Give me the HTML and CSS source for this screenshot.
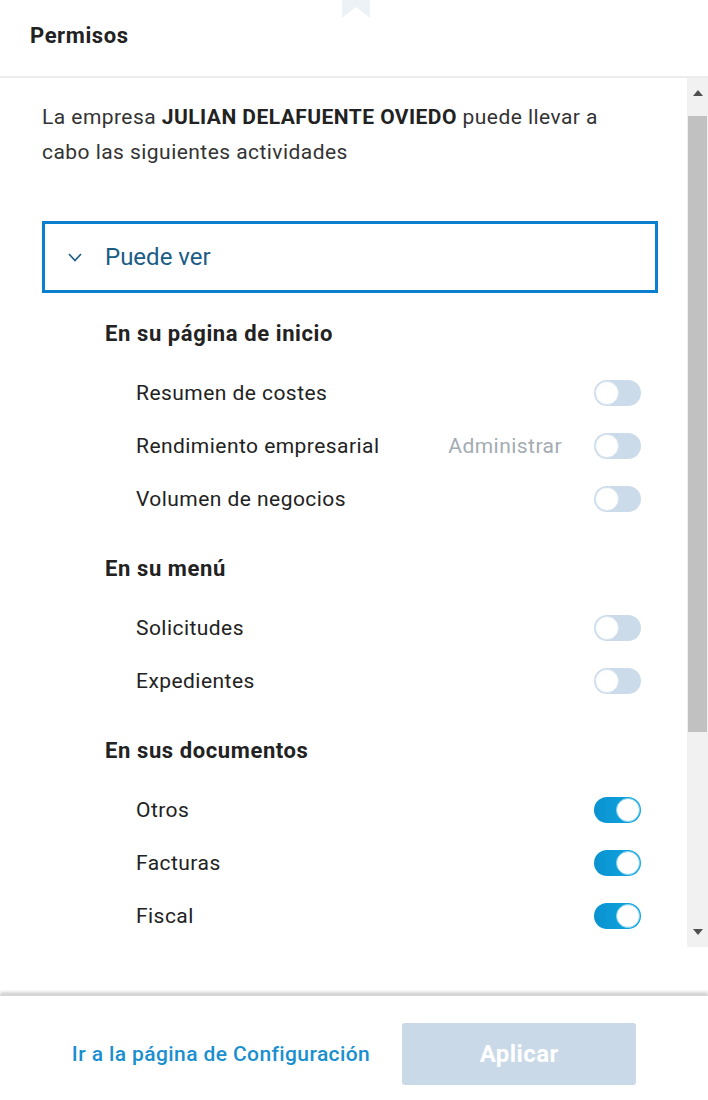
FILE: index.html
```html
<!DOCTYPE html>
<html>
  <head>
    <title>Permisos</title>
    <link rel="stylesheet" href="styles.css">
  </head>
  <body>
    <div id="panel">
      <div id="header">
        <svg class="notch" width="28" height="19" viewBox="0 0 28 19">
          <polygon points="0,0 28,0 28,18 14,7 0,18" fill="#edf2f7" />
        </svg>
        <h1>Permisos</h1>
      </div>
      <div id="body">
        <div id="content">
          <p class="intro">
            La empresa <b>JULIAN DELAFUENTE OVIEDO</b> puede llevar a
            cabo las siguientes actividades
          </p>
          <div class="accordion">
            <svg class="chevron" width="14" height="9" viewBox="0 0 14 9">
              <polyline points="1,1 7,7.5 13,1" fill="none" stroke="#1b5c86" stroke-width="1.6" />
            </svg>
            <span>Puede ver</span>
          </div>

          <div class="section">
            <h3>En su página de inicio</h3>
            <div class="rows">
              <div class="row">
                <span class="label">Resumen de costes</span>
                <span class="toggle"></span>
              </div>
              <div class="row">
                <span class="label">Rendimiento empresarial</span>
                <span class="manage">Administrar</span>
                <span class="toggle"></span>
              </div>
              <div class="row">
                <span class="label">Volumen de negocios</span>
                <span class="toggle"></span>
              </div>
            </div>
          </div>

          <div class="section">
            <h3>En su menú</h3>
            <div class="rows">
              <div class="row">
                <span class="label">Solicitudes</span>
                <span class="toggle"></span>
              </div>
              <div class="row">
                <span class="label">Expedientes</span>
                <span class="toggle"></span>
              </div>
            </div>
          </div>

          <div class="section">
            <h3>En sus documentos</h3>
            <div class="rows">
              <div class="row">
                <span class="label">Otros</span>
                <span class="toggle on"></span>
              </div>
              <div class="row">
                <span class="label">Facturas</span>
                <span class="toggle on"></span>
              </div>
              <div class="row">
                <span class="label">Fiscal</span>
                <span class="toggle on"></span>
              </div>
            </div>
          </div>
        </div>
        <div id="scrollbar">
          <div class="scroll-btn"><span class="arrow up"></span></div>
          <div class="scroll-track"><div class="thumb"></div></div>
          <div class="scroll-btn"><span class="arrow down"></span></div>
        </div>
      </div>
      <div id="spacer"></div>
      <div id="footer">
        <a class="config-link">Ir a la página de Configuración</a>
        <button class="apply-button">Aplicar</button>
      </div>
    </div>
  </body>
</html>
```

FILE: styles.css
```css
/* page */
body {
  margin: 0;
  padding: 0;
  font-family: Roboto, "Liberation Sans", sans-serif;
  background-color: white;
  color: #222;
}
#panel {
  width: 708px;
  height: 1100px;
  display: flex;
  flex-direction: column;
  overflow: hidden;
}
/* header */
#header {
  position: relative;
  height: 76px;
  border-bottom: 2px solid #ececec;
  display: flex;
  align-items: center;
  padding-left: 30px;
  box-sizing: content-box;
}
#header h1 {
  margin: 0 0 6px 0;
  font-size: 22px;
  letter-spacing: 0.6px;
  font-weight: bold;
  color: #222;
}
.notch {
  position: absolute;
  top: 0;
  left: 342px;
}
/* scroll area */
#body {
  display: flex;
  height: 869px;
}
#content {
  flex: 1;
  overflow: hidden;
  padding: 22px 29px 0 42px;
}
.intro {
  margin: 0;
  font-size: 21px;
  letter-spacing: 0.45px;
  line-height: 35px;
  color: #333;
  max-width: 590px;
}
.intro b {
  color: #222;
}
.accordion {
  margin-top: 51px;
  height: 66px;
  border: 3px solid #0a7ecf;
  display: flex;
  align-items: center;
  padding-left: 23px;
}
.accordion .chevron {
  margin-right: 23px;
}
.accordion span {
  font-size: 24px;
  color: #1b5c86;
}
.section {
  margin-top: 24px;
}
.accordion + .section {
  margin-top: 21px;
}
.section h3 {
  margin: 0;
  height: 40px;
  line-height: 40px;
  padding-left: 63px;
  font-size: 22px;
  letter-spacing: 0.6px;
  font-weight: bold;
  color: #222;
}
.rows {
  padding-top: 12px;
}
.row {
  height: 53px;
  display: flex;
  align-items: center;
  padding-left: 94px;
  padding-right: 17px;
}
.row .label {
  flex: 1;
  font-size: 21px;
  letter-spacing: 0.45px;
  color: #222;
}
.manage {
  font-size: 21px;
  letter-spacing: 0.45px;
  color: #a3abb3;
  margin-right: 32px;
}
/* toggles */
.toggle {
  position: relative;
  width: 47px;
  height: 26px;
  border-radius: 13px;
  background-color: #cbdbea;
  box-sizing: border-box;
}
.toggle::after {
  content: "";
  position: absolute;
  top: 1px;
  left: 1px;
  width: 24px;
  height: 24px;
  border-radius: 50%;
  background-color: white;
  box-sizing: border-box;
  border: 1px solid #d9e5f0;
}
.toggle.on {
  background: linear-gradient(to right, #0a92d0, #10a8e0);
}
.toggle.on::after {
  left: 22px;
  border-color: #7fd0ef;
}
/* fake scrollbar */
#scrollbar {
  width: 21px;
  background-color: #f1f1f1;
  display: flex;
  flex-direction: column;
}
.scroll-btn {
  height: 30px;
  display: flex;
  align-items: center;
  justify-content: center;
}
.arrow {
  width: 0;
  height: 0;
  border-left: 5px solid transparent;
  border-right: 5px solid transparent;
}
.arrow.up {
  border-bottom: 6px solid #505050;
}
.arrow.down {
  border-top: 6px solid #505050;
}
.scroll-track {
  flex: 1;
  padding: 8px 1px 0 1px;
}
.thumb {
  height: 616px;
  background-color: #c1c1c1;
}
/* footer */
#spacer {
  height: 48px;
}
#footer {
  flex: 1;
  display: flex;
  align-items: center;
  justify-content: center;
  gap: 32px;
  box-shadow: 0 -3px 3px rgba(0, 0, 0, 0.18);
  border-top: 1px solid #d8d8d8;
  padding-top: 11px;
}
.config-link {
  font-size: 21px;
  letter-spacing: 0.4px;
  font-weight: 500;
  color: #1a8fd0;
  cursor: pointer;
}
.apply-button {
  width: 234px;
  height: 62px;
  border: none;
  border-radius: 3px;
  background-color: #c9d9e8;
  color: white;
  font-family: Roboto, "Liberation Sans", sans-serif;
  font-size: 24px;
  letter-spacing: 0.4px;
  font-weight: bold;
}
```
